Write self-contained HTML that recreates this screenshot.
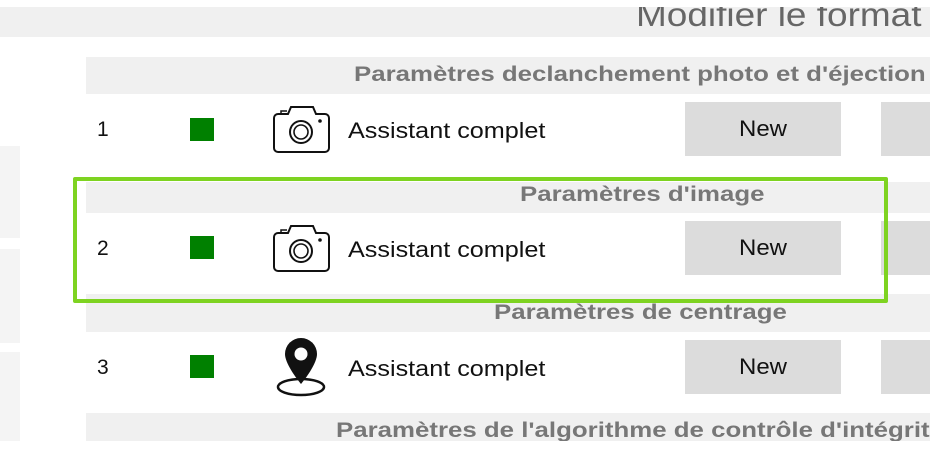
<!DOCTYPE html>
<html><head><meta charset="utf-8"><style>
html,body{margin:0;padding:0;background:#fff;width:936px;height:453px;overflow:hidden;font-family:"Liberation Sans",Arial,sans-serif}
#clip{position:absolute;left:0;top:0;width:930px;height:441px;overflow:hidden}
.a{position:absolute}
.bar{position:absolute;background:#f0f0f0}
.hd{position:absolute;font-weight:bold;font-size:21px;color:#777;white-space:nowrap;transform:scaleX(1.23);transform-origin:0 0}
.num{position:absolute;left:97px;font-size:21px;color:#111}
.sq{position:absolute;left:190px;width:24px;height:23px;background:#008000}
.txt{position:absolute;left:348px;font-size:22px;color:#111;white-space:nowrap;transform:scaleX(1.145);transform-origin:0 0}
.btn{position:absolute;left:685px;width:156px;height:54px;background:#dcdcdc;font-size:22px;color:#111;text-align:center;line-height:54px}
.btn span{display:inline-block;transform:scaleX(1.09)}
.btn2{position:absolute;left:881px;width:60px;height:54px;background:#dcdcdc}
.lp{position:absolute;left:0;width:20px;background:#f4f4f4}
</style></head><body>
<div id="clip">
<div class="bar" style="left:0;top:7px;width:930px;height:30px;overflow:hidden"><div class="a" style="left:636px;top:-11px;font-size:33px;color:#666;white-space:nowrap;transform:scaleX(1.12);transform-origin:0 0">Modifier le format</div></div>
<div class="lp" style="top:146px;height:92px"></div>
<div class="lp" style="top:249px;height:94px"></div>
<div class="lp" style="top:352px;height:89px"></div>

<div class="bar" style="left:86px;top:57px;width:850px;height:37px"></div>
<div class="hd" style="left:354px;top:63px">Paramètres declanchement photo et d'éjection</div>
<div class="num" style="top:118px">1</div><div class="sq" style="top:118px"></div>
<svg class="a" style="left:270px;top:104px" width="64" height="52" viewBox="270 104 64 52"><path d="M278 114h10l3-7h22l3 7h9a4 4 0 0 1 4 4v30a4 4 0 0 1-4 4h-47a4 4 0 0 1-4-4v-30a4 4 0 0 1 4-4z" fill="none" stroke="#111" stroke-width="2"/><circle cx="301" cy="132" r="11" fill="none" stroke="#111" stroke-width="2"/><circle cx="301" cy="132" r="7" fill="none" stroke="#111" stroke-width="1.6"/><circle cx="320" cy="121" r="1.8" fill="#111"/><path d="M281 114v-3h6" fill="none" stroke="#111" stroke-width="1.5"/></svg>
<div class="txt" style="top:118px">Assistant complet</div>
<div class="btn" style="top:102px"><span>New</span></div><div class="btn2" style="top:102px"></div>

<div class="bar" style="left:86px;top:182px;width:850px;height:31px"></div>
<div class="hd" style="left:520px;top:183px">Paramètres d'image</div>
<div class="num" style="top:237px">2</div><div class="sq" style="top:236px"></div>
<svg class="a" style="left:270px;top:223px" width="64" height="52" viewBox="270 104 64 52"><path d="M278 114h10l3-7h22l3 7h9a4 4 0 0 1 4 4v30a4 4 0 0 1-4 4h-47a4 4 0 0 1-4-4v-30a4 4 0 0 1 4-4z" fill="none" stroke="#111" stroke-width="2"/><circle cx="301" cy="132" r="11" fill="none" stroke="#111" stroke-width="2"/><circle cx="301" cy="132" r="7" fill="none" stroke="#111" stroke-width="1.6"/><circle cx="320" cy="121" r="1.8" fill="#111"/><path d="M281 114v-3h6" fill="none" stroke="#111" stroke-width="1.5"/></svg>
<div class="txt" style="top:237px">Assistant complet</div>
<div class="btn" style="top:221px"><span>New</span></div><div class="btn2" style="top:221px"></div>

<div class="bar" style="left:86px;top:294px;width:850px;height:38px"></div>
<div class="hd" style="left:494px;top:301px">Paramètres de centrage</div>
<div class="num" style="top:356px">3</div><div class="sq" style="top:355px"></div>
<svg class="a" style="left:276px;top:336px" width="52" height="62" viewBox="0 0 52 62"><ellipse cx="25" cy="51" rx="23" ry="8" fill="none" stroke="#111" stroke-width="2.5"/><path d="M25 2a16 16 0 0 0-16 16c0 11 16 30 16 30s16-19 16-30a16 16 0 0 0-16-16z" fill="#111"/><circle cx="25" cy="18" r="6.5" fill="#fff"/></svg>
<div class="txt" style="top:356px">Assistant complet</div>
<div class="btn" style="top:340px"><span>New</span></div><div class="btn2" style="top:340px"></div>

<div class="bar" style="left:86px;top:413px;width:850px;height:30px"></div>
<div class="hd" style="left:336px;top:419px">Paramètres de l'algorithme de contrôle d'intégrité</div>

<div class="a" style="left:73px;top:177px;width:807px;height:118px;border:4px solid #7ed321;border-radius:2px"></div>
</div>
</body></html>
